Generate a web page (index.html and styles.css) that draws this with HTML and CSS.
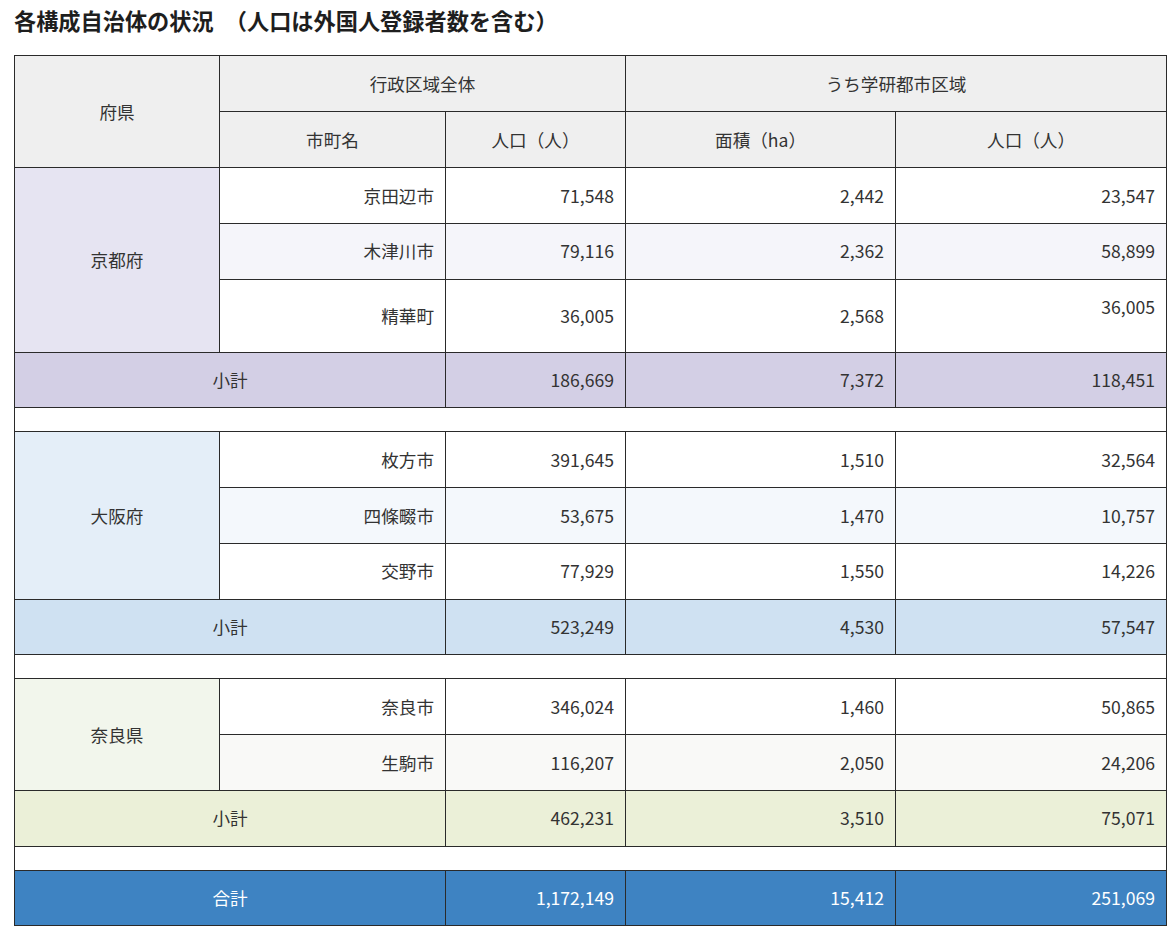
FILE: index.html
```html
<!DOCTYPE html>
<html lang="ja">
<head>
<meta charset="utf-8">
<title>各構成自治体の状況</title>
<link rel="stylesheet" href="styles.css">
</head>
<body>
<h2 class="title">各構成自治体の状況&ensp;（人口は外国人登録者数を含む）</h2>
<table class="stats">
  <colgroup>
    <col class="c1"><col class="c2"><col class="c3"><col class="c4"><col class="c5">
  </colgroup>
  <thead>
    <tr>
      <th rowspan="2">府県</th>
      <th colspan="2">行政区域全体</th>
      <th colspan="2">うち学研都市区域</th>
    </tr>
    <tr>
      <th>市町名</th>
      <th>人口（人）</th>
      <th>面積（ha）</th>
      <th>人口（人）</th>
    </tr>
  </thead>
  <tbody>
    <tr class="kyoto">
      <td rowspan="3" class="pref">京都府</td>
      <td class="num">京田辺市</td><td class="num">71,548</td><td class="num">2,442</td><td class="num">23,547</td>
    </tr>
    <tr class="kyoto alt">
      <td class="num">木津川市</td><td class="num">79,116</td><td class="num">2,362</td><td class="num">58,899</td>
    </tr>
    <tr class="kyoto">
      <td class="num">精華町</td><td class="num">36,005</td><td class="num">2,568</td><td class="num tall">36,005</td>
    </tr>
    <tr class="kyoto sub">
      <td colspan="2" class="label">小計</td><td class="num">186,669</td><td class="num">7,372</td><td class="num">118,451</td>
    </tr>
    <tr class="gap"><td colspan="5"></td></tr>

    <tr class="osaka">
      <td rowspan="3" class="pref">大阪府</td>
      <td class="num">枚方市</td><td class="num">391,645</td><td class="num">1,510</td><td class="num">32,564</td>
    </tr>
    <tr class="osaka alt">
      <td class="num">四條畷市</td><td class="num">53,675</td><td class="num">1,470</td><td class="num">10,757</td>
    </tr>
    <tr class="osaka">
      <td class="num">交野市</td><td class="num">77,929</td><td class="num">1,550</td><td class="num">14,226</td>
    </tr>
    <tr class="osaka sub">
      <td colspan="2" class="label">小計</td><td class="num">523,249</td><td class="num">4,530</td><td class="num">57,547</td>
    </tr>
    <tr class="gap"><td colspan="5"></td></tr>

    <tr class="nara">
      <td rowspan="2" class="pref">奈良県</td>
      <td class="num">奈良市</td><td class="num">346,024</td><td class="num">1,460</td><td class="num">50,865</td>
    </tr>
    <tr class="nara alt">
      <td class="num">生駒市</td><td class="num">116,207</td><td class="num">2,050</td><td class="num">24,206</td>
    </tr>
    <tr class="nara sub">
      <td colspan="2" class="label">小計</td><td class="num">462,231</td><td class="num">3,510</td><td class="num">75,071</td>
    </tr>
    <tr class="gap"><td colspan="5"></td></tr>

    <tr class="total">
      <td colspan="2" class="label">合計</td><td class="num">1,172,149</td><td class="num">15,412</td><td class="num">251,069</td>
    </tr>
  </tbody>
</table>
</body>
</html>
```
FILE: styles.css
```css
html, body {
  margin: 0;
  padding: 0;
  background: #ffffff;
}
body {
  padding: 0 14px;
  font-family: "Noto Sans CJK JP", "Noto Sans", sans-serif;
  color: #333333;
}
.title {
  margin: 6px 0 21px;
  font-size: 22.2px;
  line-height: 28px;
  font-weight: 700;
  color: #1e1e1e;
}
.stats {
  width: 1152px;
  border-collapse: collapse;
  table-layout: fixed;
  font-size: 17.6px;
  line-height: 24px;
}
.c1 { width: 205px; }
.c2 { width: 226px; }
.c3 { width: 180px; }
.c4 { width: 270px; }
.c5 { width: 271px; }
.stats th,
.stats td {
  border: 1px solid #2a2a2a;
  padding: 15.5px 11px 15.25px;
  font-weight: 400;
}
.stats th {
  background: #efefef;
  text-align: center;
  padding-bottom: 15.5px;
}
.stats td.num { text-align: right; }
.stats td.pref,
.stats td.label { text-align: center; }
.stats td.tall { padding-bottom: 32.5px; vertical-align: top; }

.kyoto td { background: #ffffff; }
.kyoto.alt td { background: #f5f5fa; }
.kyoto td.pref { background: #e6e4f2; }
.kyoto.sub td { background: #d3cfe5; }

.osaka td { background: #ffffff; }
.osaka.alt td { background: #f4f8fc; }
.osaka td.pref { background: #e4eef8; }
.osaka.sub td { background: #cfe1f2; }

.nara td { background: #ffffff; }
.nara.alt td { background: #f9f9f7; }
.nara td.pref { background: #f2f6ec; }
.nara.sub td { background: #ebf0d8; }

.stats tr.gap td {
  padding: 0;
  height: 23px;
  background: #ffffff;
}
.total td {
  background: #3e83c2;
  color: #ffffff;
}
```
